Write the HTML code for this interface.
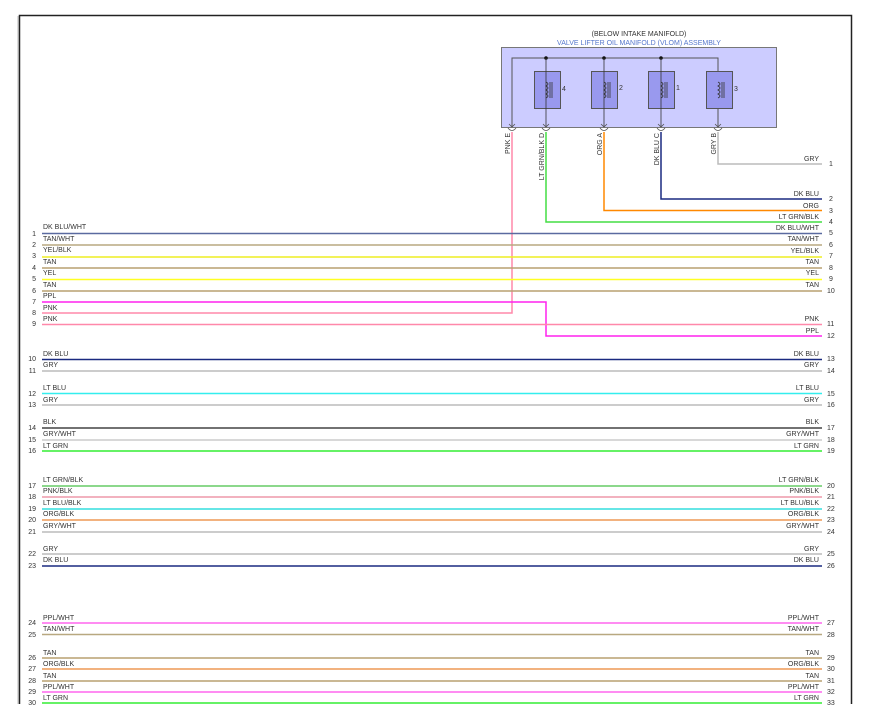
<!DOCTYPE html>
<html><head><meta charset="utf-8"><style>
html,body{margin:0;padding:0;background:#fff;width:874px;height:727px;overflow:hidden}
svg{display:block}
text{font-family:"Liberation Sans",sans-serif;font-size:7px;fill:#333}
.n{fill:#445}
</style></head><body>
<svg width="874" height="727" viewBox="0 0 874 727">
<rect x="0" y="0" width="874" height="727" fill="#fff"/>
<!-- frame -->
<path d="M19.5 704 V15.5 H851.5 V704" fill="none" stroke="#222" stroke-width="1.5"/>
<line x1="18" y1="16" x2="18" y2="704" stroke="#bbb" stroke-width="1"/>
<!-- header -->
<text x="639" y="36" text-anchor="middle" style="font-size:7px">(BELOW INTAKE MANIFOLD)</text>
<text x="639" y="45" text-anchor="middle" style="font-size:7px;fill:#5577cc">VALVE LIFTER OIL MANIFOLD (VLOM) ASSEMBLY</text>
<rect x="501.5" y="47.5" width="275" height="80" fill="#ccccff" stroke="#777" stroke-width="1"/>
<!-- bus -->
<path d="M512 127 V58 H718 V127" fill="none" stroke="#555" stroke-width="1"/>
<g fill="#111"><circle cx="546" cy="58" r="1.8"/><circle cx="604" cy="58" r="1.8"/><circle cx="661" cy="58" r="1.8"/></g>
<!-- solenoids -->
<g fill="#9999ee" stroke="#555" stroke-width="1">
<rect x="534.5" y="71.5" width="26" height="37"/>
<rect x="591.5" y="71.5" width="26" height="37"/>
<rect x="648.5" y="71.5" width="26" height="37"/>
<rect x="706.5" y="71.5" width="26" height="37"/>
</g>
<g stroke="#333" stroke-width="0.8" fill="none">
<path d="M546 58 V127"/><path d="M604 58 V127"/><path d="M661 58 V127"/>
<path d="M546 82 q4 2 0 4 q4 2 0 4 q4 2 0 4 q4 2 0 4 M550 82 V98 M552 82 V98"/>
<path d="M604 82 q4 2 0 4 q4 2 0 4 q4 2 0 4 q4 2 0 4 M608 82 V98 M610 82 V98"/>
<path d="M661 82 q4 2 0 4 q4 2 0 4 q4 2 0 4 q4 2 0 4 M665 82 V98 M667 82 V98"/>
<path d="M718 82 q4 2 0 4 q4 2 0 4 q4 2 0 4 q4 2 0 4 M722 82 V98 M724 82 V98"/>
</g>
<text x="562" y="91">4</text><text x="619" y="90">2</text><text x="676" y="90">1</text><text x="734" y="91">3</text>
<!-- connector arcs -->
<g stroke="#555" fill="none" stroke-width="0.8">
<path d="M509 124 l3 3 l3 -3 M508 128 q4 5 8 0"/>
<path d="M543 124 l3 3 l3 -3 M542 128 q4 5 8 0"/>
<path d="M601 124 l3 3 l3 -3 M600 128 q4 5 8 0"/>
<path d="M658 124 l3 3 l3 -3 M657 128 q4 5 8 0"/>
<path d="M715 124 l3 3 l3 -3 M714 128 q4 5 8 0"/>
</g>
<!-- rotated labels -->
<g>
<text transform="translate(510,133) rotate(-90)" text-anchor="end">PNK  E</text>
<text transform="translate(544,133) rotate(-90)" text-anchor="end">LT GRN/BLK  D</text>
<text transform="translate(602,133) rotate(-90)" text-anchor="end">ORG  A</text>
<text transform="translate(659,133) rotate(-90)" text-anchor="end">DK BLU  C</text>
<text transform="translate(716,133) rotate(-90)" text-anchor="end">GRY  B</text>
</g>
<!-- vertical wires from connector -->
<g fill="none" stroke-width="1.5">
<path d="M718 132 V164 H822" stroke="#bbb"/>
<path d="M661 132 V199 H822" stroke="#1a2a80"/>
<path d="M604 132 V210.5 H822" stroke="#ff8800"/>
<path d="M546 132 V222 H822" stroke="#44dd44"/>
<path d="M512 132 V313 H42" stroke="#ff88aa"/>
<path d="M42 302 H546 V336 H822" stroke="#ff22ee"/>
</g>
<!-- straight wires -->
<g stroke-width="1.5">
<line x1="42" x2="822" y1="233.5" y2="233.5" stroke="#5a6aa0"/>
<line x1="42" x2="822" y1="245" y2="245" stroke="#b8a880"/>
<line x1="42" x2="822" y1="257" y2="257" stroke="#eeee22"/>
<line x1="42" x2="822" y1="268" y2="268" stroke="#b8a070"/>
<line x1="42" x2="822" y1="279.5" y2="279.5" stroke="#ffff22"/>
<line x1="42" x2="822" y1="291" y2="291" stroke="#b8a070"/>
<line x1="42" x2="822" y1="324.5" y2="324.5" stroke="#ff88aa"/>
<line x1="42" x2="822" y1="359.5" y2="359.5" stroke="#1a2a80"/>
<line x1="42" x2="822" y1="371" y2="371" stroke="#bbb"/>
<line x1="42" x2="822" y1="393.5" y2="393.5" stroke="#33eeee"/>
<line x1="42" x2="822" y1="405" y2="405" stroke="#bbb"/>
<line x1="42" x2="822" y1="428" y2="428" stroke="#444"/>
<line x1="42" x2="822" y1="440" y2="440" stroke="#ccc"/>
<line x1="42" x2="822" y1="451" y2="451" stroke="#33ee33"/>
<line x1="42" x2="822" y1="486" y2="486" stroke="#66cc66"/>
<line x1="42" x2="822" y1="497" y2="497" stroke="#ee99aa"/>
<line x1="42" x2="822" y1="509" y2="509" stroke="#33dddd"/>
<line x1="42" x2="822" y1="520" y2="520" stroke="#ee9955"/>
<line x1="42" x2="822" y1="532" y2="532" stroke="#bbb"/>
<line x1="42" x2="822" y1="554" y2="554" stroke="#bbb"/>
<line x1="42" x2="822" y1="566" y2="566" stroke="#1a2a80"/>
<line x1="42" x2="822" y1="623" y2="623" stroke="#ff66ee"/>
<line x1="42" x2="822" y1="634.5" y2="634.5" stroke="#b8a880"/>
<line x1="42" x2="822" y1="658" y2="658" stroke="#b8a070"/>
<line x1="42" x2="822" y1="669" y2="669" stroke="#ee9955"/>
<line x1="42" x2="822" y1="681" y2="681" stroke="#b8a070"/>
<line x1="42" x2="822" y1="692" y2="692" stroke="#ff66ee"/>
<line x1="42" x2="822" y1="703" y2="703" stroke="#33ee33"/>
</g>
<!-- left labels -->
<g>
<text x="43" y="229">DK BLU/WHT</text><text x="43" y="241">TAN/WHT</text><text x="43" y="252">YEL/BLK</text>
<text x="43" y="264">TAN</text><text x="43" y="275">YEL</text><text x="43" y="287">TAN</text>
<text x="43" y="298">PPL</text><text x="43" y="310">PNK</text><text x="43" y="321">PNK</text>
<text x="43" y="356">DK BLU</text><text x="43" y="367">GRY</text><text x="43" y="390">LT BLU</text><text x="43" y="402">GRY</text>
<text x="43" y="424">BLK</text><text x="43" y="436">GRY/WHT</text><text x="43" y="448">LT GRN</text>
<text x="43" y="482">LT GRN/BLK</text><text x="43" y="493">PNK/BLK</text><text x="43" y="505">LT BLU/BLK</text>
<text x="43" y="516">ORG/BLK</text><text x="43" y="528">GRY/WHT</text><text x="43" y="551">GRY</text><text x="43" y="562">DK BLU</text>
<text x="43" y="620">PPL/WHT</text><text x="43" y="631">TAN/WHT</text><text x="43" y="655">TAN</text>
<text x="43" y="666">ORG/BLK</text><text x="43" y="678">TAN</text><text x="43" y="689">PPL/WHT</text><text x="43" y="700">LT GRN</text>
</g>
<g class="n" text-anchor="end">
<text x="36" y="236">1</text><text x="36" y="247">2</text><text x="36" y="258">3</text><text x="36" y="270">4</text>
<text x="36" y="281">5</text><text x="36" y="293">6</text><text x="36" y="304">7</text><text x="36" y="315">8</text><text x="36" y="326">9</text>
<text x="36" y="361">10</text><text x="36" y="373">11</text><text x="36" y="396">12</text><text x="36" y="407">13</text>
<text x="36" y="430">14</text><text x="36" y="442">15</text><text x="36" y="453">16</text>
<text x="36" y="488">17</text><text x="36" y="499">18</text><text x="36" y="511">19</text><text x="36" y="522">20</text><text x="36" y="534">21</text>
<text x="36" y="556">22</text><text x="36" y="568">23</text><text x="36" y="625">24</text><text x="36" y="637">25</text>
<text x="36" y="660">26</text><text x="36" y="671">27</text><text x="36" y="683">28</text><text x="36" y="694">29</text><text x="36" y="705">30</text>
</g>
<!-- right labels -->
<g text-anchor="end">
<text x="819" y="161">GRY</text><text x="819" y="196">DK BLU</text><text x="819" y="208">ORG</text><text x="819" y="219">LT GRN/BLK</text>
<text x="819" y="230">DK BLU/WHT</text><text x="819" y="241">TAN/WHT</text><text x="819" y="253">YEL/BLK</text>
<text x="819" y="264">TAN</text><text x="819" y="275">YEL</text><text x="819" y="287">TAN</text>
<text x="819" y="321">PNK</text><text x="819" y="333">PPL</text>
<text x="819" y="356">DK BLU</text><text x="819" y="367">GRY</text><text x="819" y="390">LT BLU</text><text x="819" y="402">GRY</text>
<text x="819" y="424">BLK</text><text x="819" y="436">GRY/WHT</text><text x="819" y="448">LT GRN</text>
<text x="819" y="482">LT GRN/BLK</text><text x="819" y="493">PNK/BLK</text><text x="819" y="505">LT BLU/BLK</text>
<text x="819" y="516">ORG/BLK</text><text x="819" y="528">GRY/WHT</text><text x="819" y="551">GRY</text><text x="819" y="562">DK BLU</text>
<text x="819" y="620">PPL/WHT</text><text x="819" y="631">TAN/WHT</text><text x="819" y="655">TAN</text>
<text x="819" y="666">ORG/BLK</text><text x="819" y="678">TAN</text><text x="819" y="689">PPL/WHT</text><text x="819" y="700">LT GRN</text>
</g>
<g class="n">
<text x="829" y="166">1</text><text x="829" y="201">2</text><text x="829" y="213">3</text><text x="829" y="224">4</text>
<text x="829" y="235">5</text><text x="829" y="247">6</text><text x="829" y="258">7</text><text x="829" y="270">8</text>
<text x="829" y="281">9</text><text x="827" y="293">10</text><text x="827" y="326">11</text><text x="827" y="338">12</text>
<text x="827" y="361">13</text><text x="827" y="373">14</text><text x="827" y="396">15</text><text x="827" y="407">16</text>
<text x="827" y="430">17</text><text x="827" y="442">18</text><text x="827" y="453">19</text>
<text x="827" y="488">20</text><text x="827" y="499">21</text><text x="827" y="511">22</text><text x="827" y="522">23</text><text x="827" y="534">24</text>
<text x="827" y="556">25</text><text x="827" y="568">26</text><text x="827" y="625">27</text><text x="827" y="637">28</text>
<text x="827" y="660">29</text><text x="827" y="671">30</text><text x="827" y="683">31</text><text x="827" y="694">32</text><text x="827" y="705">33</text>
</g>
<rect x="0" y="706" width="874" height="21" fill="#fff"/>
</svg>
</body></html>
